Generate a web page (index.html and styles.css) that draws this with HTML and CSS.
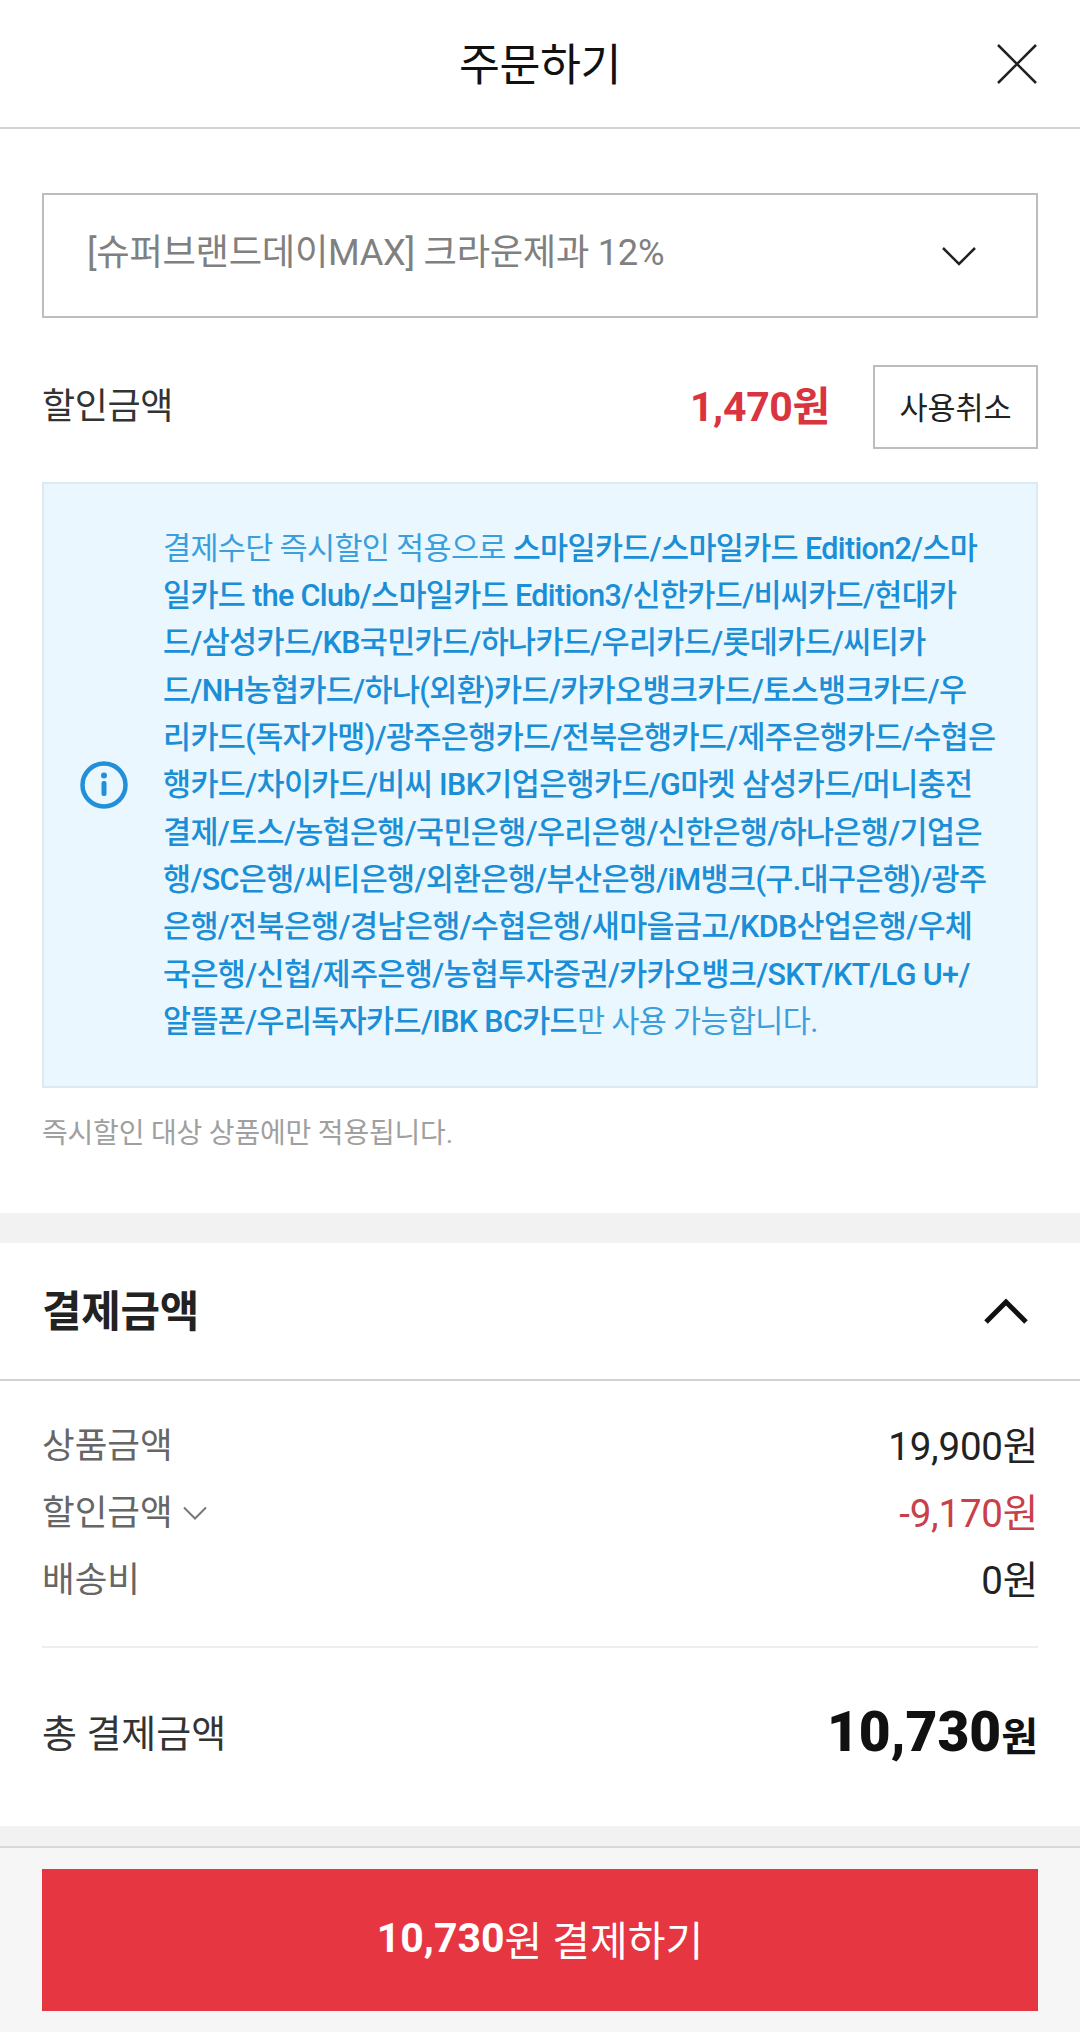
FILE: index.html
```html
<!DOCTYPE html>
<html lang="ko">
<head>
<meta charset="utf-8">
<title>주문하기</title>
<link rel="stylesheet" href="styles.css">
</head>
<body>
<div class="page">
  <header class="top">
    <h1 class="top-title">주문하기</h1>
    <svg class="close" viewBox="0 0 40 40"><path d="M1 1 L39 39 M39 1 L1 39"/></svg>
  </header>
  <section class="coupon">
    <div class="select">
      <span class="select-text">[슈퍼브랜드데이MAX] 크라운제과 12%</span>
      <svg class="sel-arrow" viewBox="0 0 34 20"><path d="M1 2 L17 18 L33 2"/></svg>
    </div>
    <div class="disc-row">
      <span class="disc-label">할인금액</span>
      <span class="disc-amt">1,470원</span>
      <span class="cancel">사용취소</span>
    </div>
    <div class="info">
      <svg class="info-icon" viewBox="0 0 48 48"><circle cx="24" cy="24" r="21.500"/><circle class="dot" cx="24" cy="14.500" r="3"/><rect class="dot" x="21.500" y="20" width="5" height="15" rx="2"/></svg>
      <p class="info-text">결제수단 즉시할인 적용으로 <b>스마일카드/스마일카드 Edition2/스마<br>일카드 the Club/스마일카드 Edition3/신한카드/비씨카드/현대카<br>드/삼성카드/KB국민카드/하나카드/우리카드/롯데카드/씨티카<br>드/NH농협카드/하나(외환)카드/카카오뱅크카드/토스뱅크카드/우<br>리카드(독자가맹)/광주은행카드/전북은행카드/제주은행카드/수협은<br>행카드/차이카드/비씨 IBK기업은행카드/G마켓 삼성카드/머니충전<br>결제/토스/농협은행/국민은행/우리은행/신한은행/하나은행/기업은<br>행/SC은행/씨티은행/외환은행/부산은행/iM뱅크(구.대구은행)/광주<br>은행/전북은행/경남은행/수협은행/새마을금고/KDB산업은행/우체<br>국은행/신협/제주은행/농협투자증권/카카오뱅크/SKT/KT/LG U+/<br>알뜰폰/우리독자카드/IBK BC카드</b>만 사용 가능합니다.</p>
    </div>
    <p class="note">즉시할인 대상 상품에만 적용됩니다.</p>
  </section>
  <section class="pay">
    <div class="pay-head">
      <h2 class="pay-title">결제금액</h2>
      <svg class="pay-arrow" viewBox="0 0 44 26"><path d="M2 24 L22 4 L42 24"/></svg>
    </div>
    <div class="pay-body">
      <div class="rows">
        <div class="row"><span class="row-label">상품금액</span><span class="row-val">19,900원</span></div>
        <div class="row"><span class="row-label">할인금액<svg class="small-arrow" viewBox="0 0 24 14"><path d="M1 1.500 L12 12.500 L23 1.500"/></svg></span><span class="row-val minus">-9,170원</span></div>
        <div class="row"><span class="row-label">배송비</span><span class="row-val">0원</span></div>
      </div>
      <div class="total">
        <span class="total-label">총 결제금액</span>
        <span class="total-amt"><b>10,730</b>원</span>
      </div>
    </div>
  </section>
  <footer class="bottom">
    <div class="pay-btn"><b>10,730</b>원 결제하기</div>
  </footer>
</div>
</body>
</html>
```
FILE: styles.css
```css
* { box-sizing: border-box; margin: 0; padding: 0; }
html, body { background: #f2f2f2; }
body { font-family: Roboto, "Noto Sans CJK KR", sans-serif; color: #222; }
.page { width: 1080px; height: 2032px; display: flex; flex-direction: column; overflow: hidden; }

.top { height: 129px; background: #fff; border-bottom: 2px solid #d2d2d2; display: flex; align-items: center; justify-content: center; position: relative; padding-bottom: 5px; }
.top-title { font-size: 44.500px; font-weight: 400; color: #111; letter-spacing: -0.5px; }
.close { position: absolute; right: 43px; top: 44px; width: 40px; height: 40px; }
.close path { fill: none; stroke: #222; stroke-width: 2.500; }

.coupon { height: 1084px; background: #fff; padding: 64px 42px 0; }
.select { height: 125px; border: 2px solid #bdbdbd; display: flex; align-items: center; justify-content: space-between; padding: 0 60px 0 43px; color: #808080; }
.select-text { font-size: 36.300px; letter-spacing: -0.3px; margin-bottom: 13px; }
.sel-arrow { width: 34px; height: 20px; }
.sel-arrow path { fill: none; stroke: #222; stroke-width: 2.500; }

.disc-row { margin-top: 47px; display: flex; align-items: center; height: 84px; }
.disc-label { font-size: 36px; color: #333; flex: 1; letter-spacing: -0.4px; margin-bottom: 8px; }
.disc-amt { font-size: 41px; font-weight: 700; color: #d9343f; letter-spacing: -0.3px; margin-right: 43px; margin-bottom: 8px; }
.cancel { width: 165px; height: 84px; border: 2px solid #bdbdbd; display: flex; align-items: center; justify-content: center; font-size: 30.500px; color: #222; padding-bottom: 3px; }

.info { margin-top: 33px; height: 606px; background: #ebf7fe; border: 2px solid #dcebf2; display: flex; align-items: center; padding: 0 0 0 36px; }
.info-icon { width: 48px; height: 48px; flex: none; margin-right: 35px; }
.info-icon circle { fill: none; stroke: #2190d8; stroke-width: 4.500; }
.info-icon .dot { fill: #2190d8; stroke: none; }
.info-text { font-size: 30.500px; line-height: 47.300px; color: #3a9fdc; white-space: nowrap; letter-spacing: -0.65px; }
.info-text b { font-weight: 500; color: #1a8ed6; }
.note { margin-top: 23px; font-size: 28px; color: #a0a0a0; letter-spacing: -0.2px; }

.pay { margin-top: 30px; height: 583px; background: #fff; }
.pay-head { height: 138px; border-bottom: 2px solid #d2d2d2; display: flex; align-items: center; justify-content: space-between; padding: 0 52px 0 42px; }
.pay-title { font-size: 43px; font-weight: 700; color: #222; letter-spacing: -0.3px; margin-bottom: 6px; }
.pay-arrow { width: 44px; height: 26px; }
.pay-arrow path { fill: none; stroke: #111; stroke-width: 5; }
.pay-body { padding: 0 42px; }
.rows { height: 267px; padding-top: 28px; border-bottom: 2px solid #eee; display: flex; flex-direction: column; }
.row { height: 67px; display: flex; justify-content: space-between; align-items: center; font-size: 35.500px; color: #222; }
.row-label { color: #666; display: flex; align-items: center; }
.row-val { font-size: 38.500px; letter-spacing: -0.2px; }
.minus { color: #c8404a; }
.small-arrow { width: 24px; height: 14px; margin-left: 10px; margin-top: 6px; }
.small-arrow path { fill: none; stroke: #777; stroke-width: 2; }
.total { height: 170px; display: flex; justify-content: space-between; align-items: center; padding-bottom: 2px; }
.total-label { font-size: 38px; color: #333; margin-bottom: 4px; }
.total-amt { font-size: 40px; font-weight: 700; color: #111; }
.total-amt b { font-size: 55px; }

.bottom { margin-top: 20px; flex: 1; background: #f6f6f6; border-top: 2px solid #d8d8d8; padding: 21px 42px 0; }
.pay-btn { height: 142px; background: #e63641; color: #fff; display: flex; align-items: center; justify-content: center; font-size: 41px; white-space: pre-wrap; padding-bottom: 5px; }
.pay-btn b { font-weight: 700; }
```
